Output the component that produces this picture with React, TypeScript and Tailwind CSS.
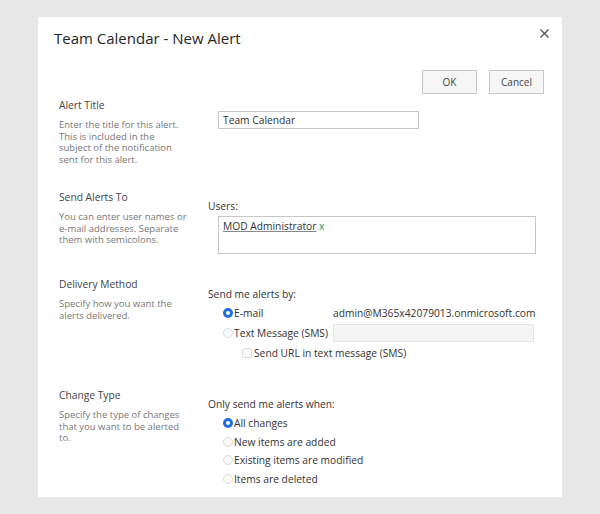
import React from "react";

function Radio({ checked }: { checked?: boolean }) {
  return checked ? (
    <span className="w-[10px] h-[10px] rounded-full bg-[#1f6fe0] flex items-center justify-center shrink-0">
      <span className="w-[4px] h-[4px] rounded-full bg-white" />
    </span>
  ) : (
    <span className="w-[10px] h-[10px] rounded-full border border-[#dcdcdc] bg-[#fafafa] shrink-0" />
  );
}

function Section({
  label,
  desc,
  className,
  children,
}: {
  label: string;
  desc: React.ReactNode;
  className?: string;
  children: React.ReactNode;
}) {
  return (
    <div className={`flex ${className ?? ""}`}>
      <div className="w-[149px] shrink-0">
        <div className="text-[10.25px] leading-[16px] text-[#444]">{label}</div>
        <div className="mt-[6px] text-[9.5px] leading-[11.7px] text-[#777]">{desc}</div>
      </div>
      <div className="flex-1 text-[10.25px] leading-[14px] text-[#333]">{children}</div>
    </div>
  );
}

export default function App() {
  return (
    <div className="min-h-[514px] w-[600px] bg-[#e7e7e7] pt-[17px] pl-[38px] font-['Open_Sans',sans-serif]">
      <div className="w-[524px] h-[480px] bg-white pt-[11px] pb-[10px]">
        {/* header */}
        <div className="flex items-start justify-between pl-[16px] pr-[13px]">
          <h1 className="text-[15px] leading-[20px] text-[#262626]">Team Calendar - New Alert</h1>
          <svg width="9" height="9" viewBox="0 0 9 9" className="mt-[1px]">
            <path d="M0.5 0.5 L8.5 8.5 M8.5 0.5 L0.5 8.5" stroke="#555" strokeWidth="1.4" />
          </svg>
        </div>

        <div className="mt-[22px] flex justify-end gap-[12px] pr-[18px]">
          {["OK", "Cancel"].map((b) => (
            <button
              key={b}
              className="w-[55px] h-[24px] border border-[#c8c8c8] bg-[#f6f6f6] text-[10px] text-[#444]"
            >
              {b}
            </button>
          ))}
        </div>

        <div className="pl-[21px]">
          <Section
            className="mt-[3px]"
            label="Alert Title"
            desc={
              <>
                Enter the title for this alert.
                <br />
                This is included in the
                <br />
                subject of the notification
                <br />
                sent for this alert.
              </>
            }
          >
            <div className="pt-[14px] pl-[10px]">
              <div className="w-[201px] h-[18px] border border-[#c6c6c6] flex items-center pl-[4px] text-[10.25px] text-[#333]">
                Team Calendar
              </div>
            </div>
          </Section>

          <Section
            className="mt-[23px]"
            label="Send Alerts To"
            desc={
              <>
                You can enter user names or
                <br />
                e-mail addresses. Separate
                <br />
                them with semicolons.
              </>
            }
          >
            <div className="pt-[10px]">
              <div>Users:</div>
              <div className="mt-[3px] ml-[10px] w-[318px] h-[38px] border border-[#c6c6c6] pl-[4px] pt-[2px]">
                <span className="underline decoration-[#888] text-[#333]">MOD Administrator</span>{" "}
                <span className="text-[#2e8b57]">x</span>
              </div>
            </div>
          </Section>

          <Section
            className="mt-[22px]"
            label="Delivery Method"
            desc={
              <>
                Specify how you want the
                <br />
                alerts delivered.
              </>
            }
          >
            <div className="pt-[11px]">
              <div>Send me alerts by:</div>
              <div className="mt-[2px] pl-[15px]">
                <div className="h-[20px] flex items-center">
                  <div className="w-[110px] flex items-center gap-[1px]">
                    <Radio checked />
                    <span>E-mail</span>
                  </div>
                  <span>admin@M365x42079013.onmicrosoft.com</span>
                </div>
                <div className="h-[20px] flex items-center">
                  <div className="w-[110px] flex items-center gap-[1px]">
                    <Radio />
                    <span>Text Message (SMS)</span>
                  </div>
                  <div className="w-[201px] h-[18px] bg-[#f5f5f5] border border-[#e6e6e6]" />
                </div>
                <div className="h-[20px] flex items-center pl-[19px] gap-[2px]">
                  <span className="w-[10px] h-[10px] rounded-[2px] border border-[#dcdcdc] bg-[#fafafa]" />
                  <span>Send URL in text message (SMS)</span>
                </div>
              </div>
            </div>
          </Section>

          <Section
            className="mt-[24px]"
            label="Change Type"
            desc={
              <>
                Specify the type of changes
                <br />
                that you want to be alerted
                <br />
                to.
              </>
            }
          >
            <div className="pt-[10px]">
              <div>Only send me alerts when:</div>
              <div className="mt-[3px] pl-[15px]">
                {[
                  ["All changes", true],
                  ["New items are added", false],
                  ["Existing items are modified", false],
                  ["Items are deleted", false],
                ].map(([t, c]) => (
                  <div key={t as string} className="h-[18.5px] flex items-center gap-[1px]">
                    <Radio checked={c as boolean} />
                    <span>{t as string}</span>
                  </div>
                ))}
              </div>
            </div>
          </Section>
        </div>
      </div>
    </div>
  );
}
